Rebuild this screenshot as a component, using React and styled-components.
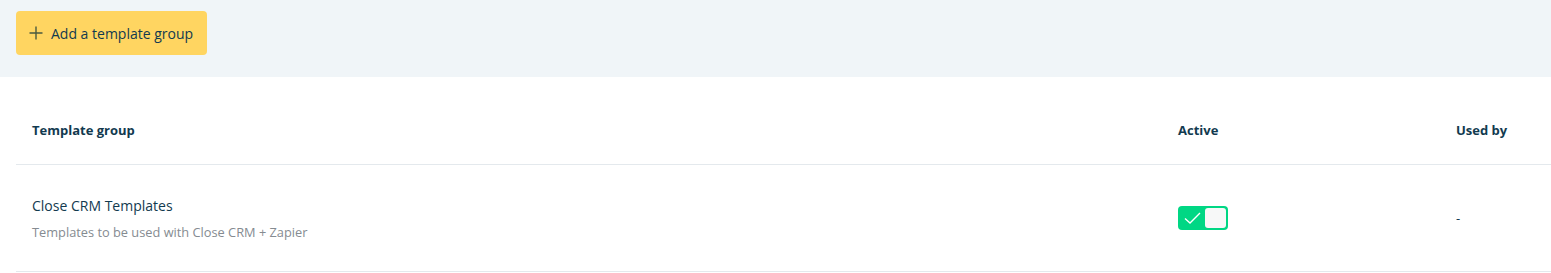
import React from "react";
import styled, { createGlobalStyle } from "styled-components";

const Global = createGlobalStyle`
  body { margin: 0; background: #fff; font-family: "Open Sans", "Noto Sans", sans-serif; color: #123a4f; }
`;

const TopBar = styled.div`
  background: #f0f5f8;
  height: 77px;
  box-sizing: border-box;
  padding: 11px 16px;
`;

const AddButton = styled.button`
  display: inline-flex;
  align-items: center;
  gap: 8px;
  height: 44px;
  box-sizing: border-box;
  padding: 0 13px 0 13px;
  width: 191px;
  background: #ffd561;
  border: none;
  border-radius: 4px;
  font-family: inherit;
  font-size: 14px;
  color: #123a4f;
  cursor: pointer;
  white-space: nowrap;
`;

const Table = styled.div`
  padding-left: 16px;
`;

const Row = styled.div`
  display: grid;
  grid-template-columns: 1fr 278px 95px;
  align-items: ${(p) => (p.$head ? "end" : "center")};
  height: ${(p) => (p.$head ? "88px" : "107px")};
  box-sizing: border-box;
  padding-bottom: ${(p) => (p.$head ? "24px" : "0")};
  border-bottom: 1px solid #e4e9ed;
`;

const HeadCell = styled.div`
  font-weight: 700;
  font-size: 13px;
  line-height: 20px;
  color: #123a4f;
  padding-left: ${(p) => (p.$first ? "16px" : "0")};
`;

const Cell = styled.div`
  padding-left: ${(p) => (p.$first ? "16px" : "0")};
  font-size: 13px;
`;

const Title = styled.div`
  font-size: 14px;
  line-height: 20px;
  color: #123a4f;
`;

const Sub = styled.div`
  margin-top: 7px;
  font-size: 12.8px;
  line-height: 18px;
  color: #858b91;
`;

const Toggle = styled.div`
  width: 50px;
  height: 24px;
  box-sizing: border-box;
  border-radius: 4px;
  background: #00d784;
  display: flex;
  align-items: center;
  justify-content: space-between;
  padding: 2px;
`;

const Knob = styled.div`
  width: 21px;
  height: 20px;
  border-radius: 3px;
  background: #f7f8f8;
`;

const Check = () => (
  <svg width="20" height="16" viewBox="0 0 20 16" style={{ marginLeft: 3 }}>
    <path d="M2 8.5 L7 13 L17 3" fill="none" stroke="#fff" strokeWidth="1.4" />
  </svg>
);

const Plus = () => (
  <svg width="14" height="14" viewBox="0 0 14 14">
    <path d="M7 0.5 V13.5 M0.5 7 H13.5" stroke="#4a5a40" strokeWidth="1.4" />
  </svg>
);

export default function App() {
  return (
    <>
      <Global />
      <TopBar>
        <AddButton>
          <Plus />
          Add a template group
        </AddButton>
      </TopBar>
      <Table>
        <Row $head>
          <HeadCell $first>Template group</HeadCell>
          <HeadCell>Active</HeadCell>
          <HeadCell>Used by</HeadCell>
        </Row>
        <Row>
          <Cell $first>
            <Title>Close CRM Templates</Title>
            <Sub>Templates to be used with Close CRM + Zapier</Sub>
          </Cell>
          <Cell>
            <Toggle>
              <Check />
              <Knob />
            </Toggle>
          </Cell>
          <Cell>-</Cell>
        </Row>
      </Table>
    </>
  );
}
